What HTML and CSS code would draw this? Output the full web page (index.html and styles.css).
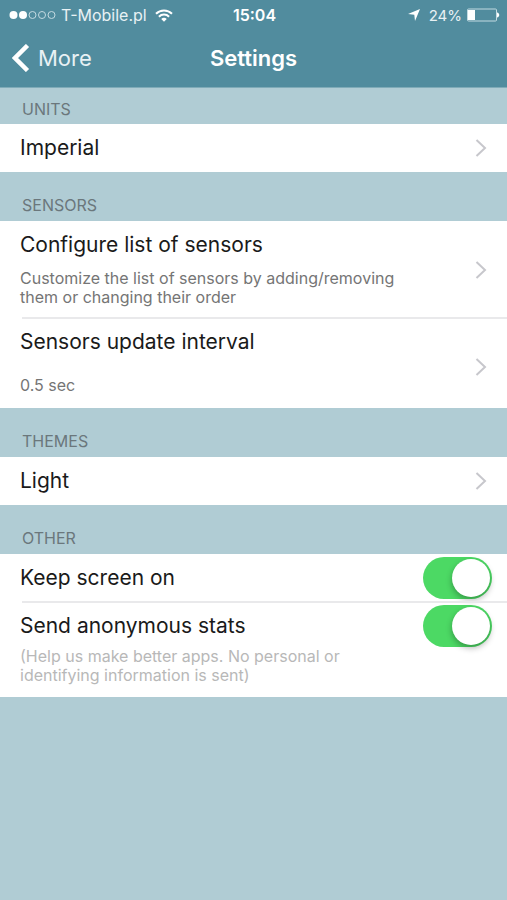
FILE: index.html
```html
<!DOCTYPE html>
<html lang="en">
<head>
    <meta charset="UTF-8">
    <meta name="viewport" content="width=device-width, initial-scale=1.0">
    <title>Settings</title>
    <link rel="stylesheet" href="styles.css">
</head>
<body>
    <header>
        <div class="status-bar">
            <div class="status-left">
                <svg class="signal" width="47" height="10" viewBox="0 0 47 10">
                    <circle cx="4.5" cy="5" r="4" fill="#fff"/>
                    <circle cx="14" cy="5" r="4" fill="#fff"/>
                    <circle cx="23.5" cy="5" r="3.5" fill="none" stroke="#c3dae1"/>
                    <circle cx="33" cy="5" r="3.5" fill="none" stroke="#c3dae1"/>
                    <circle cx="42.5" cy="5" r="3.5" fill="none" stroke="#c3dae1"/>
                </svg>
                <span class="carrier">T-Mobile.pl</span>
                <svg width="18" height="13" viewBox="0 0 18 13" fill="none" stroke="#fff" stroke-width="2">
                    <path d="M1 4.8a11.3 11.3 0 0 1 16 0"/>
                    <path d="M3.9 7.7a7.2 7.2 0 0 1 10.2 0"/>
                    <path d="M6.2 10L9 12.8l2.8-2.8a4 4 0 0 0-5.6 0z" fill="#fff" stroke="none"/>
                </svg>
            </div>
            <span class="clock">15:04</span>
            <div class="status-right">
                <svg class="location" width="12" height="12" viewBox="0 0 12 12">
                    <path d="M12 0L7 12 6.3 5.7 0 5z" fill="#fff"/>
                </svg>
                <span class="battery-level">24%</span>
                <svg width="34" height="14" viewBox="0 0 34 14">
                    <rect x="1.5" y="1" width="29" height="12" rx="1" fill="none" stroke="#c3dae1"/>
                    <rect x="2" y="2" width="7" height="10" fill="#fff"/>
                    <path d="M31 4.5c3 .5 3 4.5 0 5z" fill="#fff"/>
                </svg>
            </div>
        </div>
        <nav class="nav-bar">
            <a href="#" class="back">
                <svg width="18" height="28" viewBox="0 0 18 28">
                    <path d="M15.5 1.5L3 14l12.5 12.5" fill="none" stroke="#fff" stroke-width="4.5"/>
                </svg>
                <span>More</span>
            </a>
            <h1>Settings</h1>
        </nav>
    </header>

    <main>
        <h2 class="section-title first">UNITS</h2>
        <div class="group">
            <a href="#" class="row">
                <span class="row-title">Imperial</span>
                <svg class="chevron" viewBox="0 0 12 18"><path d="M1.5 1L10 9l-8.500 8"/></svg>
            </a>
        </div>

        <h2 class="section-title">SENSORS</h2>
        <div class="group">
            <a href="#" class="row detail configure">
                <span class="row-text">
                    <span class="row-title">Configure list of sensors</span>
                    <span class="row-info">Customize the list of sensors by adding/removing them or changing their order</span>
                </span>
                <svg class="chevron" viewBox="0 0 12 18"><path d="M1.5 1L10 9l-8.500 8"/></svg>
            </a>
            <a href="#" class="row detail interval">
                <span class="row-text">
                    <span class="row-title">Sensors update interval</span>
                    <span class="row-info">0.5 sec</span>
                </span>
                <svg class="chevron" viewBox="0 0 12 18"><path d="M1.5 1L10 9l-8.500 8"/></svg>
            </a>
        </div>

        <h2 class="section-title">THEMES</h2>
        <div class="group">
            <a href="#" class="row">
                <span class="row-title">Light</span>
                <svg class="chevron" viewBox="0 0 12 18"><path d="M1.5 1L10 9l-8.500 8"/></svg>
            </a>
        </div>

        <h2 class="section-title">OTHER</h2>
        <div class="group">
            <div class="row switch-row">
                <label class="row-title" for="keepScreen">Keep screen on</label>
                <input type="checkbox" class="switch" id="keepScreen" checked>
            </div>
            <div class="row switch-row detail stats">
                <label class="row-text" for="sendStats">
                    <span class="row-title">Send anonymous stats</span>
                    <span class="row-info light">(Help us make better apps. No personal or identifying information is sent)</span>
                </label>
                <input type="checkbox" class="switch" id="sendStats" checked>
            </div>
        </div>
    </main>
</body>
</html>
```

FILE: styles.css
```css
* {
    box-sizing: border-box;
}
body {
    font-family: Inter, "Liberation Sans", sans-serif;
    margin: 0;
    background: #b0ccd4;
    color: #1a1a1a;
}
header {
    background: #518c9e;
    color: white;
    border-bottom: 1px solid #7fabb8;
}
.status-bar {
    display: grid;
    grid-template-columns: 1fr auto 1fr;
    align-items: center;
    height: 30px;
    padding: 0 7px 0 9px;
    font-size: 16px;
    color: #e8f1f4;
}
.status-left,
.status-right {
    display: flex;
    align-items: center;
}
.status-right {
    justify-content: flex-end;
    gap: 4px;
}
.carrier {
    margin: 0 8px 0 5px;
}
.battery-level {
    font-size: 15px;
}
.location {
    margin-right: 5px;
}
.clock {
    font-weight: 600;
    color: white;
}
.nav-bar {
    display: grid;
    grid-template-columns: 1fr auto 1fr;
    align-items: center;
    height: 57px;
    padding: 0 12px 2px;
}
.back {
    display: flex;
    align-items: center;
    gap: 8px;
    color: #e8f1f4;
    font-size: 22px;
    text-decoration: none;
}
h1 {
    margin: 0;
    font-size: 22px;
    font-weight: 600;
}
.section-title {
    display: flex;
    align-items: flex-end;
    height: 49px;
    margin: 0;
    padding: 0 22px 6px;
    font-size: 16px;
    font-weight: 400;
    line-height: 20px;
    color: #6b777c;
}
.section-title.first {
    height: 36px;
    padding-bottom: 5px;
}
.group {
    background: white;
}
.row {
    display: flex;
    align-items: center;
    justify-content: space-between;
    min-height: 48px;
    padding: 0 20px;
    color: inherit;
    text-decoration: none;
}
.row + .row {
    position: relative;
}
/* inset divider between rows */
.row + .row::before {
    content: '';
    position: absolute;
    top: -1px;
    left: 22px;
    right: 0;
    height: 2px;
    background: #e9e9eb;
}
.row-title {
    display: block;
    font-size: 21px;
    line-height: 26px;
}
.row-text {
    display: block;
    flex: 1;
    max-width: 390px;
}
.row-info {
    display: flex;
    align-items: center;
    min-height: 38px;
    font-size: 16px;
    line-height: 19px;
    color: #757575;
}
.row-info.light {
    color: #b8b8b8;
}
.configure {
    padding-top: 11px;
    padding-bottom: 11px;
}
.configure .row-info {
    margin-top: 11px;
}
.interval {
    padding-top: 11px;
    padding-bottom: 4px;
}
.interval .row-info {
    margin-top: 11px;
}
.switch-row {
    padding-right: 15px;
}
.stats {
    align-items: flex-start;
    padding-top: 11px;
    padding-bottom: 12px;
}
.stats .row-info {
    margin-top: 8px;
}
.stats .switch {
    margin-top: -8px;
}
.chevron {
    flex: none;
    width: 12px;
    height: 18px;
    fill: none;
    stroke: #c7c7cc;
    stroke-width: 2;
}
.switch {
    appearance: none;
    flex: none;
    width: 69px;
    height: 42px;
    margin: 0;
    padding: 2px;
    border-radius: 21px;
    background: #d8d8d8;
    cursor: pointer;
}
.switch::before {
    content: '';
    display: block;
    width: 38px;
    height: 38px;
    border-radius: 50%;
    background: white;
    box-shadow: 0 3px 6px rgba(0, 0, 0, 0.3);
}
.switch:checked {
    background: #4cd964;
}
.switch:checked::before {
    margin-left: auto;
}
```
